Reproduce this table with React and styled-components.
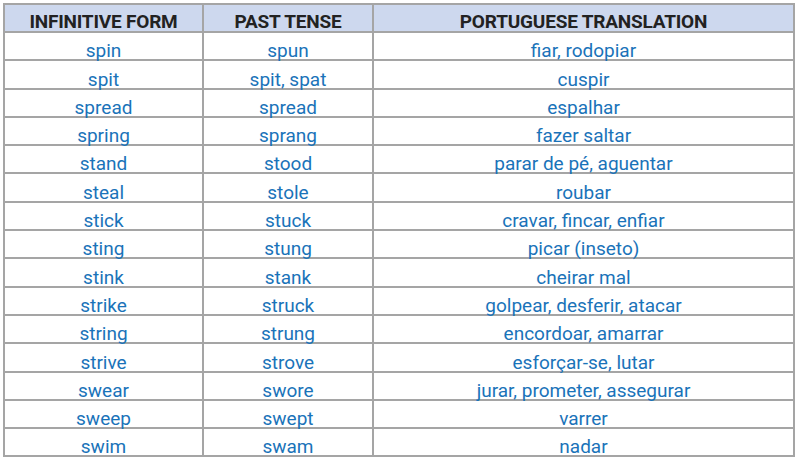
import React from "react";
import styled, { createGlobalStyle } from "styled-components";

const GlobalStyle = createGlobalStyle`
  body {
    margin: 0;
    background: #fff;
    font-family: Roboto, "Liberation Sans", sans-serif;
  }
`;

const rows = [
  ["spin", "spun", "fiar, rodopiar"],
  ["spit", "spit, spat", "cuspir"],
  ["spread", "spread", "espalhar"],
  ["spring", "sprang", "fazer saltar"],
  ["stand", "stood", "parar de pé, aguentar"],
  ["steal", "stole", "roubar"],
  ["stick", "stuck", "cravar, fincar, enfiar"],
  ["sting", "stung", "picar (inseto)"],
  ["stink", "stank", "cheirar mal"],
  ["strike", "struck", "golpear, desferir, atacar"],
  ["string", "strung", "encordoar, amarrar"],
  ["strive", "strove", "esforçar-se, lutar"],
  ["swear", "swore", "jurar, prometer, assegurar"],
  ["sweep", "swept", "varrer"],
  ["swim", "swam", "nadar"],
];

const Wrap = styled.div`
  padding: 3px 0 0 3px;
`;

const Table = styled.table`
  border-collapse: collapse;
  width: 792px;
  table-layout: fixed;
`;

const HeadCell = styled.th`
  background: #cdd8ee;
  color: #222;
  font-size: 19px;
  font-weight: 700;
  letter-spacing: -0.2px;
  height: 25px;
  padding: 0 0 1px;
  border: 2px solid #a5a5a5;
  text-align: center;
  vertical-align: bottom;
  line-height: 17px;
`;

const Cell = styled.td`
  color: #1a73b9;
  font-size: 19px;
  height: 26.3px;
  padding: 0;
  border: 2px solid #a5a5a5;
  text-align: center;
  vertical-align: bottom;
  line-height: 17px;
`;

export default function App() {
  return (
    <>
      <GlobalStyle />
      <Wrap>
        <Table>
          <colgroup>
            <col style={{ width: 199 }} />
            <col style={{ width: 170 }} />
            <col />
          </colgroup>
          <thead>
            <tr>
              <HeadCell>INFINITIVE FORM</HeadCell>
              <HeadCell>PAST TENSE</HeadCell>
              <HeadCell>PORTUGUESE TRANSLATION</HeadCell>
            </tr>
          </thead>
          <tbody>
            {rows.map((r) => (
              <tr key={r[0]}>
                {r.map((c, i) => (
                  <Cell key={i}>{c}</Cell>
                ))}
              </tr>
            ))}
          </tbody>
        </Table>
      </Wrap>
    </>
  );
}
